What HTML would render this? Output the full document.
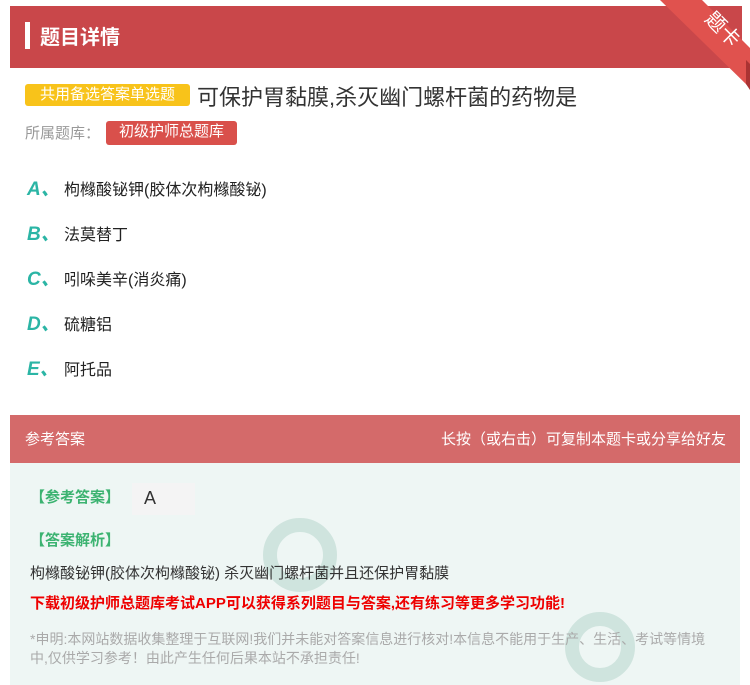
<!DOCTYPE html>
<html><head><meta charset="utf-8"><style>
*{margin:0;padding:0;box-sizing:border-box}
body{width:750px;height:685px;background:#fff;font-family:"Liberation Sans","Noto Sans CJK SC",sans-serif;position:relative;overflow:hidden}
.abs{position:absolute;white-space:nowrap}
.hdr{left:10px;top:6px;width:732px;height:62px;background:#c9474a}
.opt{left:27px;font-size:16px;color:#222}
.opt b{display:inline-block;width:37px;color:#2bb5a5;font-style:italic;font-size:19px;font-weight:bold}
</style></head><body>
<div class="abs hdr"></div>
<div class="abs" style="left:25px;top:22px;width:5px;height:27px;background:#fff"></div>
<div class="abs" style="left:40px;top:21px;font-size:20px;font-weight:bold;color:#fff">题目详情</div>
<svg class="abs" style="left:650px;top:0" width="100" height="90"><polygon points="10,0 52,0 100,48 100,88" fill="#e0524e"/><polygon points="96,60 100,64 100,90 96,84" fill="#a33"/><text x="68" y="34" text-anchor="middle" fill="#fff" font-size="20" font-family="Noto Sans CJK SC" transform="rotate(45 68 34)">题卡</text></svg>
<div class="abs" style="left:25px;top:84px;width:165px;height:22px;background:#f8c31a;border-radius:3px;color:#fff;font-size:15px;line-height:22px;text-align:center">共用备选答案单选题</div>
<div class="abs" style="left:197px;top:80px;font-size:22px;color:#333">可保护胃黏膜,杀灭幽门螺杆菌的药物是</div>
<div class="abs" style="left:25px;top:122px;font-size:15px;color:#999">所属题库：</div>
<div class="abs" style="left:106px;top:121px;width:131px;height:24px;background:#d9504b;border-radius:3px;color:#fff;font-size:15px;line-height:22px;text-align:center">初级护师总题库</div>
<div class="abs opt" style="top:174px"><b>A、</b>枸橼酸铋钾(胶体次枸橼酸铋)</div>
<div class="abs opt" style="top:219px"><b>B、</b>法莫替丁</div>
<div class="abs opt" style="top:264px"><b>C、</b>吲哚美辛(消炎痛)</div>
<div class="abs opt" style="top:309px"><b>D、</b>硫糖铝</div>
<div class="abs opt" style="top:354px"><b>E、</b>阿托品</div>
<div class="abs" style="left:10px;top:415px;width:730px;height:48px;background:#d46a6a"></div>
<div class="abs" style="left:25px;top:428px;font-size:15px;color:#fff">参考答案</div>
<div class="abs" style="right:24px;top:428px;font-size:15px;color:#fff">长按（或右击）可复制本题卡或分享给好友</div>
<div class="abs" style="left:10px;top:463px;width:730px;height:222px;background:#eef6f4"></div>
<svg class="abs" style="left:260px;top:510px" width="80" height="90"><circle cx="40" cy="45" r="30" fill="none" stroke="#cfe4de" stroke-width="14"/></svg>
<svg class="abs" style="left:560px;top:605px" width="80" height="80"><circle cx="40" cy="42" r="28" fill="none" stroke="#cfe4de" stroke-width="14"/></svg>
<div class="abs" style="left:30px;top:486px;font-size:15px;font-weight:bold;color:#3cb371">【参考答案】</div>
<div class="abs" style="left:132px;top:483px;width:63px;height:32px;background:#f4f4f4;font-size:18px;color:#333;padding-left:12px;line-height:30px">A</div>
<div class="abs" style="left:30px;top:529px;font-size:15px;font-weight:bold;color:#3cb371">【答案解析】</div>
<div class="abs" style="left:30px;top:562px;font-size:15px;color:#333">枸橼酸铋钾(胶体次枸橼酸铋) 杀灭幽门螺杆菌并且还保护胃黏膜</div>
<div class="abs" style="left:30px;top:592px;font-size:15px;font-weight:bold;color:#e00">下载初级护师总题库考试APP可以获得系列题目与答案,还有练习等更多学习功能!</div>
<div class="abs" style="left:30px;top:630px;font-size:14px;color:#aaa;line-height:19px;white-space:normal;width:690px">*申明:本网站数据收集整理于互联网!我们并未能对答案信息进行核对!本信息不能用于生产、生活、考试等情境中,仅供学习参考！由此产生任何后果本站不承担责任!</div>
</body></html>
